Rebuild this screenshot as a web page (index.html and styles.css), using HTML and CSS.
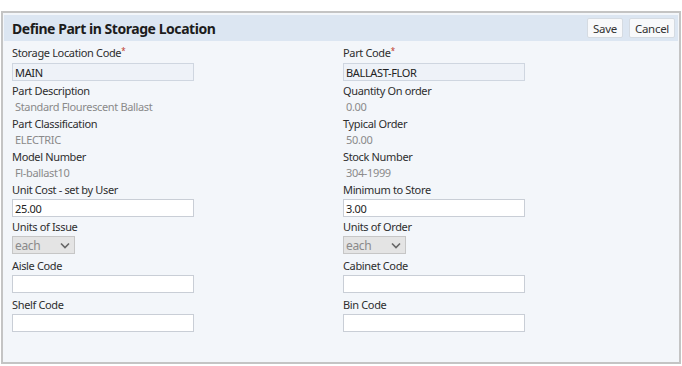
FILE: index.html
```html
<!DOCTYPE html>
<html lang="en">
<head>
  <meta charset="UTF-8">
  <title>Define Part in Storage Location</title>
  <link rel="stylesheet" href="styles.css">
</head>
<body>
  <div class="panel">
    <div class="panel-head">
      <h1>Define Part in Storage Location</h1>
      <div class="actions">
        <button class="btn">Save</button>
        <button class="btn">Cancel</button>
      </div>
    </div>

    <div class="panel-body">
      <div class="field">
        <label>Storage Location Code<span class="req">*</span></label>
        <input class="input readonly" type="text" value="MAIN" readonly>
      </div>
      <div class="field">
        <label>Part Code<span class="req">*</span></label>
        <input class="input readonly" type="text" value="BALLAST-FLOR" readonly>
      </div>

      <div class="field">
        <label>Part Description</label>
        <div class="value">Standard Flourescent Ballast</div>
      </div>
      <div class="field">
        <label>Quantity On order</label>
        <div class="value">0.00</div>
      </div>

      <div class="field">
        <label>Part Classification</label>
        <div class="value">ELECTRIC</div>
      </div>
      <div class="field">
        <label>Typical Order</label>
        <div class="value">50.00</div>
      </div>

      <div class="field">
        <label>Model Number</label>
        <div class="value">Fl-ballast10</div>
      </div>
      <div class="field">
        <label>Stock Number</label>
        <div class="value">304-1999</div>
      </div>

      <div class="field compact">
        <label>Unit Cost - set by User</label>
        <input class="input" type="text" value="25.00">
      </div>
      <div class="field compact">
        <label>Minimum to Store</label>
        <input class="input" type="text" value="3.00">
      </div>

      <div class="field">
        <label>Units of Issue</label>
        <div class="select">
          <span>each</span>
          <svg width="10" height="7" viewBox="0 0 10 7"><path d="M1 1.5 L5 5.5 L9 1.5" fill="none" stroke="#666" stroke-width="1.6"/></svg>
        </div>
      </div>
      <div class="field">
        <label>Units of Order</label>
        <div class="select">
          <span>each</span>
          <svg width="10" height="7" viewBox="0 0 10 7"><path d="M1 1.5 L5 5.5 L9 1.5" fill="none" stroke="#666" stroke-width="1.6"/></svg>
        </div>
      </div>

      <div class="field">
        <label>Aisle Code</label>
        <input class="input" type="text">
      </div>
      <div class="field">
        <label>Cabinet Code</label>
        <input class="input" type="text">
      </div>

      <div class="field">
        <label>Shelf Code</label>
        <input class="input" type="text">
      </div>
      <div class="field">
        <label>Bin Code</label>
        <input class="input" type="text">
      </div>
    </div>
  </div>
</body>
</html>
```

FILE: styles.css
```css
body {
  margin: 0;
  font-family: 'Noto Sans', sans-serif;
  font-size: 11px;
  letter-spacing: -0.35px;
  color: #2e2e2e;
  background: #fff;
}

.panel {
  margin: 11px 1px 2px 1px;
  height: 346px;
  border: 2px solid #c4c4c4;
  padding: 2px 1px 1px 1px;
  background: #f3f6fa;
}

.panel-head {
  display: flex;
  justify-content: space-between;
  align-items: center;
  height: 26px;
  padding: 0 3px 0 8px;
  background: #dce6f2;
}

h1 {
  margin: 0;
  font-size: 14px;
  font-weight: bold;
  letter-spacing: -0.45px;
  color: #1c1c1c;
}

.actions {
  display: flex;
  gap: 6px;
}

.btn {
  font-family: 'Noto Sans', sans-serif;
  font-size: 11.5px;
  letter-spacing: -0.3px;
  color: #333;
  height: 20px;
  padding: 0 5px;
  background: #f8f9fb;
  border: 1px solid #d5dbe2;
  border-radius: 2px;
}

.panel-body {
  display: grid;
  grid-template-columns: 331px 1fr;
  padding: 2px 8px 0 8px;
}

.field label {
  display: block;
  height: 15px;
  line-height: 15px;
}

.req {
  color: #c0392b;
  font-size: 8px;
  vertical-align: 3px;
}

.value {
  height: 18px;
  line-height: 18px;
  padding-left: 3px;
  color: #8a8a8a;
}

.input {
  display: block;
  box-sizing: border-box;
  width: 182px;
  height: 18px;
  margin: 2px 0 4px 0;
  padding: 0 2px;
  font-family: 'Noto Sans', sans-serif;
  font-size: 11px;
  letter-spacing: -0.35px;
  color: #222;
  background: #fff;
  border: 1px solid #c9ced6;
}

.input.readonly {
  margin: 5px 0 2px 0;
  background: #eef2f8;
  border-color: #cfd6e0;
}

.compact .input {
  margin-bottom: 2px;
}

.select {
  box-sizing: border-box;
  display: flex;
  justify-content: space-between;
  align-items: center;
  width: 63px;
  height: 18px;
  margin: 2px 0 4px 0;
  padding: 0 4px 0 2px;
  color: #8a8a8a;
  font-size: 12px;
  background: #e4e4e4;
  border: 1px solid #c6c6c6;
}
```
